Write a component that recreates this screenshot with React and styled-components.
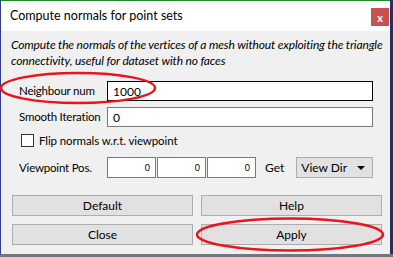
import React from 'react';
import styled, { createGlobalStyle } from 'styled-components';

const Global = createGlobalStyle`
  html, body { margin: 0; padding: 0; }
  body {
    width: 393px;
    height: 257px;
    overflow: hidden;
    background: #2b2e5c;
    font-family: Lato, "Liberation Sans", sans-serif;
  }
`;

const Screen = styled.div`
  position: relative;
  width: 393px;
  height: 257px;
  overflow: hidden;
  background: linear-gradient(to bottom, #2b2e5c 0, #2b2e5c 254px, #6d7b80 254px);
`;

const Window = styled.div`
  width: 389px;
  height: 253px;
  border-left: 1px solid #323a8c;
  border-top: 1px solid #1f8a2e;
  display: flex;
  flex-direction: column;
  background: #f0f0f0;
`;

const TitleBar = styled.div`
  height: 30px;
  flex: none;
  background: #ffffff;
  display: flex;
  align-items: center;
  justify-content: space-between;
  padding-left: 9px;
`;

const Title = styled.span`
  font-size: 12.5px;
  line-height: 18px;
  color: #000;
  margin-top: -1px;
`;

const CloseBtn = styled.div`
  width: 18px;
  height: 18px;
  margin-right: 1px;
  margin-top: 2px;
  background: #c75050;
  color: #fff;
  font-size: 11px;
  font-weight: bold;
  display: flex;
  align-items: center;
  justify-content: center;
  line-height: 1;
`;

const Body = styled.div`
  flex: 1;
  padding: 6px 9px 0 10px;
  display: flex;
  flex-direction: column;
`;

const Description = styled.p`
  margin: 0;
  font-size: 12px;
  font-style: italic;
  line-height: 16px;
  letter-spacing: -0.15px;
  color: #000;
  white-space: nowrap;
`;

const Form = styled.div`
  margin-top: 12px;
  padding: 0 8px 0 8px;
  display: grid;
  grid-template-columns: 88px 1fr;
  row-gap: 6px;
  align-items: center;
`;

const Label = styled.span`
  font-size: 11.5px;
  line-height: 16px;
  letter-spacing: -0.2px;
  white-space: nowrap;
  color: #000;
`;

const TextBox = styled.div`
  height: 18px;
  border: 1px solid ${({ focused }) => (focused ? '#000' : '#7a7a7a')};
  background: #fff;
  font-size: 12px;
  padding-left: 5px;
  display: flex;
  align-items: center;
`;

const CheckRow = styled.label`
  grid-column: 1 / 3;
  display: flex;
  align-items: flex-start;
  gap: 5px;
  height: 18px;
  padding: 1px 0 0 2px;
  box-sizing: border-box;
  font-size: 11.5px;
  letter-spacing: -0.1px;
  line-height: 14px;
  white-space: nowrap;
`;

const Box = styled.span`
  width: 11px;
  height: 11px;
  border: 1px solid #333;
  background: #fff;
`;

const VectorRow = styled.div`
  display: flex;
  align-items: center;
`;

const Coord = styled.div`
  width: 49px;
  height: 21px;
  box-sizing: border-box;
  border: 1px solid #7a7a7a;
  background: #fff;
  font-size: 9px;
  display: flex;
  align-items: center;
  justify-content: flex-end;
  padding-right: 5px;
  & + & { margin-left: 1px; }
`;

const GetLabel = styled.span`
  font-size: 12px;
  margin: 0 12px 0 9px;
`;

const Combo = styled.div`
  flex: 1;
  height: 19px;
  border: 1px solid #adadad;
  background: #e1e1e1;
  font-size: 12px;
  display: flex;
  align-items: center;
  justify-content: space-between;
  padding: 0 7px 0 4px;
`;

const Arrow = styled.span`
  width: 0;
  height: 0;
  border-left: 4px solid transparent;
  border-right: 4px solid transparent;
  border-top: 4px solid #000;
`;

const Buttons = styled.div`
  margin-top: 17px;
  display: grid;
  grid-template-columns: 181px 181px;
  column-gap: 8px;
  row-gap: 8px;
  padding-left: 1px;
`;

const Button = styled.div`
  height: 19px;
  border: 1px solid #adadad;
  background: #e1e1e1;
  font-size: 12px;
  display: flex;
  align-items: center;
  justify-content: center;
  color: #000;
`;

const Marks = styled.svg`
  position: absolute;
  left: 0;
  top: 0;
  pointer-events: none;
`;

export default function App() {
  return (
    <Screen>
      <Global />
      <Window>
        <TitleBar>
          <Title>Compute normals for point sets</Title>
          <CloseBtn>x</CloseBtn>
        </TitleBar>
        <Body>
          <Description>
            Compute the normals of the vertices of a mesh without exploiting the triangle
            <br />
            connectivity, useful for dataset with no faces
          </Description>
          <Form>
            <Label>Neighbour num</Label>
            <TextBox focused>1000</TextBox>
            <Label>Smooth Iteration</Label>
            <TextBox>0</TextBox>
            <CheckRow>
              <Box />
              Flip normals w.r.t. viewpoint
            </CheckRow>
            <Label>Viewpoint Pos.</Label>
            <VectorRow>
              <Coord>0</Coord>
              <Coord>0</Coord>
              <Coord>0</Coord>
              <GetLabel>Get</GetLabel>
              <Combo>
                View Dir
                <Arrow />
              </Combo>
            </VectorRow>
          </Form>
          <Buttons>
            <Button>Default</Button>
            <Button>Help</Button>
            <Button>Close</Button>
            <Button>Apply</Button>
          </Buttons>
        </Body>
      </Window>
      <Marks width="393" height="257">
        <ellipse cx="78" cy="88" rx="77" ry="15" fill="none" stroke="#e8141e" strokeWidth="2.5" />
        <ellipse cx="290" cy="234.5" rx="93" ry="16" fill="none" stroke="#e8141e" strokeWidth="2.5" />
      </Marks>
    </Screen>
  );
}
